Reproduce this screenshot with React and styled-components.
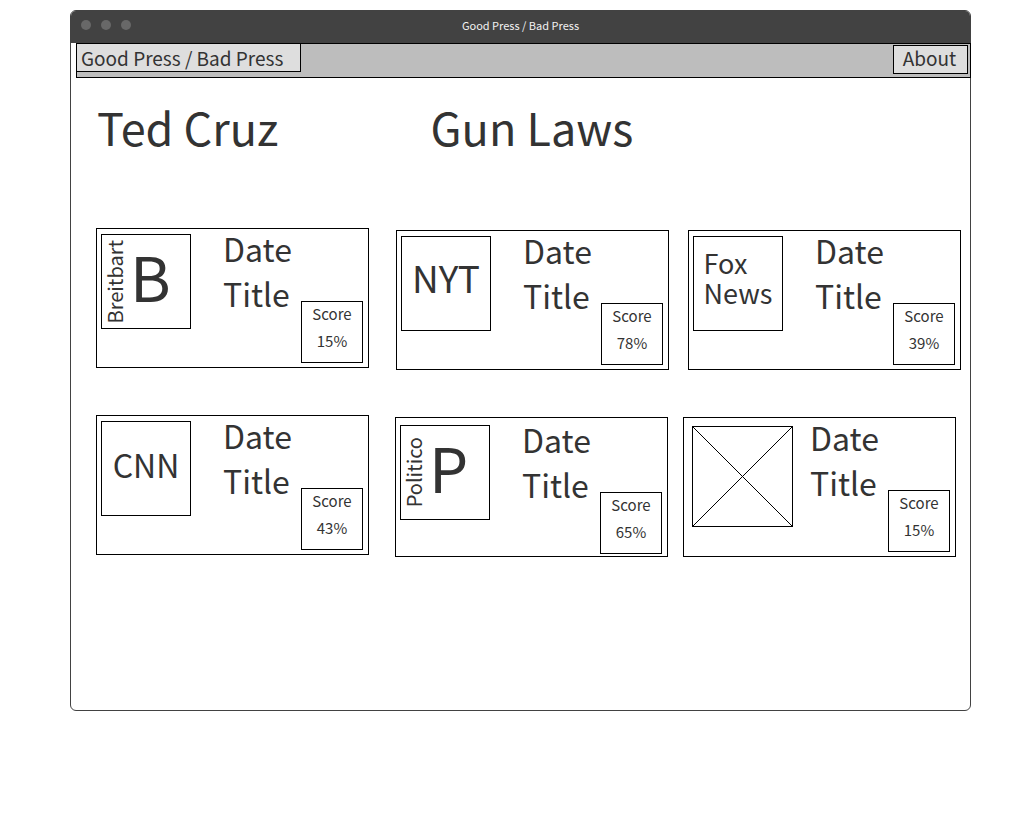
import React from "react";
import styled, { createGlobalStyle } from "styled-components";

const GlobalStyle = createGlobalStyle`
  * { box-sizing: border-box; }
  body {
    margin: 0;
    background: #fff;
    color: #333;
    font-family: "Noto Sans CJK SC", "Noto Sans", sans-serif;
  }
  h1, h2, p { margin: 0; font-weight: 400; }
`;

const Window = styled.div`
  margin: 10px 50px 0 70px;
  border: 1px solid #424242;
  border-radius: 6px;
`;

const TitleBar = styled.header`
  display: grid;
  grid-template-columns: 1fr auto 1fr;
  align-items: center;
  height: 32px;
  padding: 0 10px 4px;
  border-radius: 5px 5px 0 0;
  background: #424242;
  color: #f2f2f2;
  font-size: 11px;
  line-height: 16px;
`;

const Dots = styled.div`
  display: flex;
  gap: 10px;
`;

const Dot = styled.span`
  width: 10px;
  height: 10px;
  border-radius: 50%;
  background: #686868;
`;

const Nav = styled.nav`
  display: flex;
  justify-content: space-between;
  align-items: flex-start;
  height: 35px;
  margin: 0 -1px 0 5px;
  border: 1px solid #000;
  background: #bdbdbd;
`;

const Brand = styled.a`
  width: 225px;
  height: 29px;
  margin: -1px 0 0 -1px;
  padding-left: 4px;
  border: 1px solid #000;
  background: #dedede;
  color: #333;
  font-size: 19px;
  line-height: 28px;
  text-decoration: none;
`;

const NavButton = styled.button`
  width: 75px;
  height: 29px;
  margin: 1px 2px 0 0;
  padding: 0 2px 3px 0;
  border: 1px solid #000;
  background: #dedede;
  color: #333;
  font: inherit;
  font-size: 19px;
  line-height: 24px;
`;

const Main = styled.main`
  padding: 13px 9px 153px 25px;
`;

const Topics = styled.div`
  display: grid;
  grid-template-columns: 334fr 531fr;
  padding-left: 1px;
  margin-bottom: 65px;
`;

const Topic = styled.h1`
  font-size: 45px;
  line-height: 72px;
`;

const Row = styled.section`
  display: grid;
  grid-template-columns: ${(p) => p.$columns};
  align-items: end;
  margin-bottom: ${(p) => (p.$last ? "0" : "45px")};

  & > :first-child { margin-bottom: 2px; }
`;

const Card = styled.article`
  display: grid;
  grid-template-columns: 122px 1fr 62px;
  max-width: 273px;
  height: 140px;
  padding: ${(p) => `${p.$inset}px 5px ${9 - p.$inset}px 4px`};
  border: 1px solid #000;
`;

const Logo = styled.div`
  display: flex;
  align-items: center;
  justify-content: ${(p) => (p.$spine ? "flex-start" : "center")};
  width: 90px;
  height: 95px;
  border: 1px solid #000;
`;

const LogoText = styled.span`
  font-size: ${(p) => p.$size}px;
  line-height: 30px;
  padding-bottom: ${(p) => p.$lift}px;
`;

const Spine = styled.span`
  width: 28px;
  writing-mode: vertical-rl;
  transform: rotate(180deg);
  font-size: 20px;
  line-height: 26px;
  text-align: center;
`;

const Placeholder = styled.svg`
  display: block;
  width: 101px;
  height: 101px;
  margin: 3px 0 0 4px;
`;

const Lines = styled.div`
  font-size: 32px;
  line-height: 45px;
  margin-top: -8px;
`;

const Heading = styled.h2`
  font-size: inherit;
`;

const Score = styled.div`
  align-self: end;
  height: 62px;
  border: 1px solid #000;
  font-size: 15px;
  line-height: 27px;
  text-align: center;

  & > :first-child { margin-top: -2px; }
`;

const rows = [
  {
    columns: "300fr 292fr 273fr",
    cards: [
      { spine: "Breitbart", text: "B", size: 62, lift: 14, score: "15%" },
      { text: "NYT", size: 37, lift: 14, score: "78%" },
      { text: "Fox\nNews", size: 27, lift: 12, score: "39%" },
    ],
  },
  {
    columns: "299fr 288fr 278fr",
    cards: [
      { text: "CNN", size: 32, lift: 10, score: "43%" },
      { spine: "Politico", text: "P", size: 62, lift: 14, score: "65%", inset: 7 },
      { score: "15%" },
    ],
  },
];

function Source({ spine, text, size, lift }) {
  if (!text) {
    return (
      <Placeholder viewBox="0 0 101 101" role="img" aria-label="Source logo">
        <rect x="0.5" y="0.5" width="100" height="100" fill="none" stroke="#000" />
        <path d="M0.5 0.5L100.5 100.5M100.5 0.5L0.5 100.5" stroke="#000" />
      </Placeholder>
    );
  }
  return (
    <Logo $spine={spine}>
      {spine && <Spine>{spine}</Spine>}
      <LogoText $size={size} $lift={lift}>
        {text.split("\n").map((line) => (
          <div key={line}>{line}</div>
        ))}
      </LogoText>
    </Logo>
  );
}

export default function App() {
  return (
    <>
      <GlobalStyle />
      <Window>
        <TitleBar>
          <Dots><Dot /><Dot /><Dot /></Dots>
          <span>Good Press / Bad Press</span>
        </TitleBar>
        <Nav>
          <Brand href="#">Good Press / Bad Press</Brand>
          <NavButton type="button">About</NavButton>
        </Nav>
        <Main>
          <Topics>
            <Topic>Ted Cruz</Topic>
            <Topic>Gun Laws</Topic>
          </Topics>
          {rows.map((row, r) => (
            <Row key={row.columns} $columns={row.columns} $last={r === rows.length - 1}>
              {row.cards.map((card, i) => (
                <Card key={i} $inset={card.inset || 5}>
                  <Source {...card} />
                  <Lines>
                    <p>Date</p>
                    <Heading>Title</Heading>
                  </Lines>
                  <Score>
                    <p>Score</p>
                    <p>{card.score}</p>
                  </Score>
                </Card>
              ))}
            </Row>
          ))}
        </Main>
      </Window>
    </>
  );
}
